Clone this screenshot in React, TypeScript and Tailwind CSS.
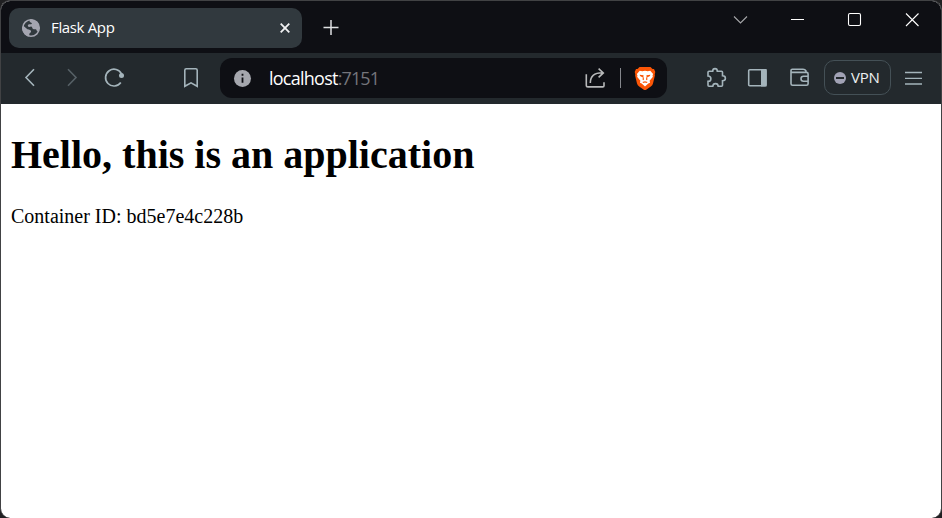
import type { ReactNode } from "react";

type GlyphProps = { box: string; className: string; children: ReactNode };

function Glyph({ box, className, children }: GlyphProps) {
  return (
    <svg viewBox={box} fill="none" stroke="currentColor" strokeWidth="1.6" className={`block shrink-0 ${className}`} aria-hidden="true">
      {children}
    </svg>
  );
}

function TabStrip() {
  return (
    <div className="flex h-[52px] shrink-0 items-start bg-[#0e0f14] pl-2">
      <div className="mt-[7px] flex h-10 w-[293px] items-center rounded-[10px] bg-[#31393e] pl-3">
        <Glyph box="21 18 20 20" className="h-5 w-5 text-[#a4a5b0]">
          <circle cx="31" cy="28" r="8.3" strokeWidth="1.5" />
          <path
            fill="currentColor"
            stroke="none"
            d="M23 25.5l4.4 3.8c2 .3 3.700.7 3.700 2.300 0 1.200-1.600 1.200-1.800 2.700l-.1 2.200c-4-.8-7-4.500-7-8.500zM29.800 19.600c3.800-.8 8 1.900 9.200 5.800.5 2.100.2 4.300-.8 6.200-.9-.1-1.400-.6-1.600-1.400-.4-1.500-2.200-.4-3.500-1.200-1-.7-.7-2-1.500-2.300-.9-.4-2.600.8-3.500-.2-.7-.8 0-2 1-2.200 1.300-.2 2.700.2 2.800-.8.100-.9-1.800-.8-2.200-1.700z"
          />
        </Glyph>
        <span className="mb-0.5 ml-[10px] w-[66px] whitespace-nowrap text-[15px] leading-5 tracking-[-0.35px] text-white">Flask App</span>
        <Glyph box="277 20 16 16" className="ml-auto mr-[9px] h-4 w-4 text-[#f1f2f3]">
          <path d="M280.700 23.700l8.600 8.600M289.300 23.700l-8.600 8.600" strokeWidth="1.800" />
        </Glyph>
      </div>
      <Glyph box="321 18 20 20" className="ml-[19px] mt-[17px] h-5 w-5 text-[#dfe1e3]">
        <path d="M323.500 27.500h15M331 20v15" strokeWidth="1.500" />
      </Glyph>
      <div className="ml-auto flex text-white">
        <Glyph box="712 1 57 40" className="h-10 w-[57px] text-[#a5a6a9]">
          <path d="M734 16.500l6.500 6.500 6.500-6.500" strokeWidth="1.100" />
        </Glyph>
        <Glyph box="769 1 57 40" className="h-10 w-[57px]">
          <path d="M791 19.500h13" strokeWidth="1" />
        </Glyph>
        <Glyph box="826 1 57 40" className="h-10 w-[57px]">
          <rect x="848.500" y="13.500" width="12" height="12" rx="1.500" strokeWidth="1.100" />
        </Glyph>
        <Glyph box="883 1 58 40" className="h-10 w-[58px]">
          <path d="M906 13.500l12.500 12.500M918.500 13.500l-12.500 12.500" strokeWidth="1.100" />
        </Glyph>
      </div>
    </div>
  );
}

function AddressBar() {
  return (
    <div className="mb-px ml-[17px] flex h-10 w-[447px] items-center rounded-xl bg-[#0e0f14] pl-[13px]">
      <Glyph box="233 68 19 20" className="h-5 w-[19px]">
        <circle cx="242.500" cy="78.500" r="8.500" fill="#a5a7ae" stroke="none" />
        <path d="M242.500 77.500v5.300M242.500 73.700v2" stroke="#0e0f14" strokeWidth="1.800" />
      </Glyph>
      <span className="mb-px ml-[17px] whitespace-nowrap text-[18px] leading-6 tracking-[-0.75px] text-white">
        localhost<span className="tracking-[-0.9px] text-[#74757b]">:7151</span>
      </span>
      <Glyph box="584 66 24 24" className="ml-auto h-6 w-6 text-[#b8b9ba]">
        <path d="M586.300 74.300v10.900q0 1.700 1.700 1.700h14.800q1.200 0 1.200-1.200v-3.500M590.300 83c0-6.500 3.500-10.200 12-10.200M598.600 68.700l4.700 4.200-4.700 4.400" />
      </Glyph>
      <span className="ml-3 h-5 w-px bg-[#85878c]" />
      <Glyph box="634 66 22 25" className="ml-[13px] mr-[11px] h-[25px] w-[22px]">
        <path fill="#fb5607" stroke="none" d="M639.500 67h11l2 2 1.500-.1 1.300 3.100-.6 2.200.2 1.400-1.900 7.900q-.5 1.900-2.200 3.100l-4.600 3.100q-1.200.8-2.400 0l-4.600-3.100q-1.700-1.200-2.200-3.100l-1.900-7.900.2-1.400-.6-2.200 1.300-3.100 1.500.1z" />
        <path fill="#fff" stroke="none" d="M639.700 70.800l2.600.5 2.700-.6 2.700.6 2.600-.5 2.800 3.200-.6 1.700.4 1.100-3.300 4 .5 2-1.800.7-3.300 2.900-3.300-2.900-1.800-.7.5-2-3.300-4 .4-1.100-.6-1.700z" />
        <path fill="#fb5607" stroke="none" d="M639.700 74.700l3.900.5-.2 1.200.6 2.900-.6 1-.9-.9.400-1.800-2.900-1.600zM650.300 74.700l-3.900.5.2 1.200-.6 2.900.6 1 .9-.9-.4-1.800 2.900-1.600zM642.300 82l2.700-.8 2.700.8-1.200 1-1.500-.6-1.500.6z" />
      </Glyph>
    </div>
  );
}

function Toolbar() {
  return (
    <div className="flex h-[51px] shrink-0 items-center bg-[#23292d] pl-[17px] text-[#a4b4bb]">
      <Glyph box="18 66 24 25" className="h-[25px] w-6">
        <path d="M34 69.300l-8 8.200 8 8.200" />
      </Glyph>
      <Glyph box="60 66 24 25" className="ml-[18px] h-[25px] w-6 text-[#566066]">
        <path d="M68 69.300l8 8.200-8 8.200" />
      </Glyph>
      <Glyph box="102 66 26 25" className="ml-[18px] h-[25px] w-[26px]">
        <path d="M120.800 82.500a8.400 8.400 0 1 1 .8-8.400" strokeWidth="1.700" />
        <circle cx="121.500" cy="75.500" r="2.500" fill="currentColor" stroke="none" />
      </Glyph>
      <Glyph box="179 66 24 25" className="ml-[51px] h-[25px] w-6">
        <path d="M186.300 68.800h9.400q1.500 0 1.500 1.500v16l-6.200-3.500-6.200 3.500v-16q0-1.500 1.500-1.500z" />
      </Glyph>
      <AddressBar />
      <Glyph box="704 66 24 25" className="ml-[37px] h-[25px] w-6">
        <path d="M709 71.200h3.700c0-1.600.9-2.600 2.300-2.600s2.300 1 2.300 2.600h4.200q1 0 1 1v3.600c1.800 0 2.900.9 2.900 2.500s-1.100 2.500-2.900 2.500v4.400q0 1-1 1h-3.300c-.1-1.600-1-2.600-2.700-2.600s-2.600 1-2.700 2.600H709q-1 0-1-1v-3.800c1.800 0 2.900-1.100 2.900-2.700s-1.100-2.700-2.900-2.700v-3.800q0-1 1-1z" />
      </Glyph>
      <Glyph box="745 66 24 25" className="ml-[17px] h-[25px] w-6">
        <rect x="748.700" y="69.700" width="17.300" height="16" rx="1" />
        <path d="M761 69h5.600v17.400H761z" fill="currentColor" stroke="none" />
      </Glyph>
      <Glyph box="788 66 24 25" className="ml-[19px] h-[25px] w-6">
        <path d="M791 73v-2.400q0-1.300 1.300-1.300H803q2 0 3 1.700v1.700M791 72.400h15.500q1.600 0 1.600 1.600v9.700q0 1.600-1.600 1.600h-13.900q-1.600 0-1.600-1.600zM808.200 76.200h-4.700a2.500 2.500 0 0 0 0 5h4.700" />
      </Glyph>
      <div className="mb-0.5 ml-3 flex h-[35px] w-[67px] items-center rounded-[10px] border border-[#445056] pl-[9px]">
        <span className="flex h-3 w-3 items-center justify-center rounded-full bg-[#a1a2b5]">
          <span className="h-0.5 w-2 bg-[#23292d]" />
        </span>
        <span className="mb-0.5 ml-[5px] text-[15px] leading-5 tracking-[-0.2px] text-[#edf0f1]">VPN</span>
      </div>
      <Glyph box="901 66 24 25" className="ml-[10px] h-[25px] w-6">
        <path d="M905 72.500h17M905 78.300h17M905 84h17" strokeWidth="1.300" />
      </Glyph>
    </div>
  );
}

export default function App() {
  return (
    <div className="h-[518px] w-[942px] overflow-hidden bg-[#202022]">
      <div className="flex h-full flex-col overflow-hidden rounded-[10px] border-x border-t border-[#414244] bg-white font-['Open_Sans','Noto_Sans',sans-serif]">
        <TabStrip />
        <Toolbar />
        <main className="flex-1 px-[10px] pt-7 font-['Liberation_Serif',serif] text-black">
          <h1 className="whitespace-nowrap text-[40px] font-bold leading-[46px]">Hello, this is an application</h1>
          <p className="mt-[27px] text-[20px] leading-[23px]">Container ID: bd5e7e4c228b</p>
        </main>
      </div>
    </div>
  );
}
